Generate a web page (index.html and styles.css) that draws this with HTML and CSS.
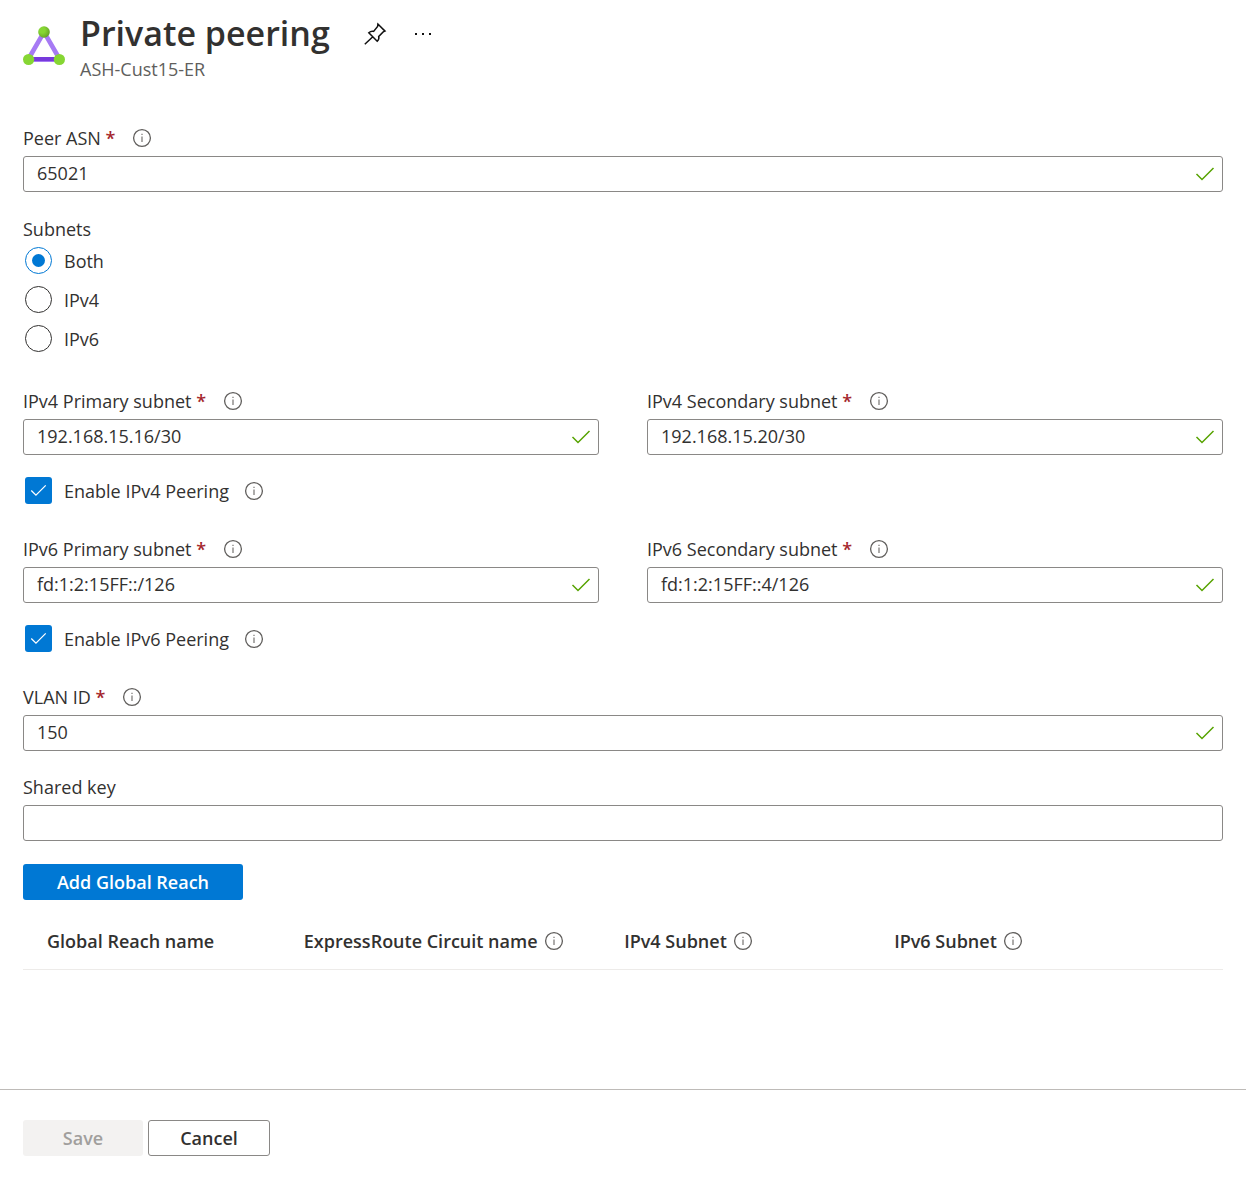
FILE: index.html
```html
<!DOCTYPE html>
<html lang="en">
<head>
<meta charset="utf-8">
<meta name="viewport" content="width=device-width, initial-scale=1">
<title>Private peering</title>
<link rel="stylesheet" href="styles.css">
</head>
<body>
<svg class="sprite" aria-hidden="true">
  <symbol id="info" viewBox="0 0 20 20">
    <circle cx="10" cy="10" r="8.4" fill="none" stroke="#605e5c" stroke-width="1.3"/>
    <path d="M10 8.5V14M10 5.8V7" fill="none" stroke="#8a8886" stroke-width="1.4"/>
  </symbol>
  <symbol id="check" viewBox="0 0 20 20">
    <path d="M1.5 10L7 15.5L18.5 4" fill="none" stroke="currentColor" stroke-width="1.5"/>
  </symbol>
</svg>
<header class="header">
  <svg class="logo" viewBox="0 0 42 42" aria-hidden="true">
    <defs>
      <radialGradient id="dot" cx="0.35" cy="0.35" r="0.8"><stop offset="0.3" stop-color="#86d633"/><stop offset="1" stop-color="#5e9624"/></radialGradient>
    </defs>
    <path d="M6 34L21 8L36 34" fill="none" stroke="#a67af4" stroke-width="4.6"/>
    <path d="M6 35.500H36" stroke="#a67af4" stroke-width="5"/>
    <path d="M6 35H36" stroke="#773adc" stroke-width="4"/>
    <circle cx="21" cy="8" r="5.800" fill="url(#dot)"/>
    <circle cx="5.600" cy="35.500" r="5.600" fill="#86d633"/>
    <circle cx="36.400" cy="35.500" r="5.600" fill="#86d633"/>
  </svg>
  <div class="heading">
    <h1 class="title">Private peering</h1>
    <p class="subtitle">ASH-Cust15-ER</p>
  </div>
  <div class="tools">
    <button class="tool" type="button" aria-label="Pin">
      <svg class="tool-icon" viewBox="0 0 24 24" fill="none" stroke="#111" stroke-width="1.5" stroke-linejoin="miter"><path d="M14.900 2L22 9.100L20.200 9.900L15.700 14.400C16.300 16.200 15.600 17.800 14.200 19.200L5.800 10.800C7.400 9.300 9 8.900 10.600 9.400L14.600 4.500ZM9.800 14.800L1.800 22.200"/></svg>
    </button>
    <button class="tool" type="button" aria-label="More">
      <svg class="tool-icon" viewBox="0 0 24 24" fill="#111"><path d="M4 11h2v2H4zM11 11h2v2h-2zM18 11h2v2h-2z"/></svg>
    </button>
  </div>
</header>
<main class="form">
  <div class="field">
    <div class="label-row"><label for="asn">Peer ASN <span class="required">*</span></label><svg class="info"><use href="#info"/></svg></div>
    <div class="control"><input class="input" id="asn" type="text" value="65021"><svg class="valid"><use href="#check"/></svg></div>
  </div>
  <fieldset class="subnets">
    <legend class="label-row">Subnets</legend>
    <div class="options">
      <label class="option"><input class="radio" type="radio" name="subnets" checked>Both</label>
      <label class="option"><input class="radio" type="radio" name="subnets">IPv4</label>
      <label class="option"><input class="radio" type="radio" name="subnets">IPv6</label>
    </div>
  </fieldset>
  <section class="peering">
    <div class="pair">
      <div class="field">
        <div class="label-row"><label for="v4p">IPv4 Primary subnet <span class="required">*</span></label><svg class="info"><use href="#info"/></svg></div>
        <div class="control"><input class="input" id="v4p" type="text" value="192.168.15.16/30"><svg class="valid"><use href="#check"/></svg></div>
      </div>
      <div class="field">
        <div class="label-row"><label for="v4s">IPv4 Secondary subnet <span class="required">*</span></label><svg class="info"><use href="#info"/></svg></div>
        <div class="control"><input class="input" id="v4s" type="text" value="192.168.15.20/30"><svg class="valid"><use href="#check"/></svg></div>
      </div>
    </div>
    <div class="enable">
      <label class="option"><span class="tick"><input class="checkbox" type="checkbox" checked><svg class="tick-mark"><use href="#check"/></svg></span>Enable IPv4 Peering</label>
      <svg class="info"><use href="#info"/></svg>
    </div>
  </section>
  <section class="peering">
    <div class="pair">
      <div class="field">
        <div class="label-row"><label for="v6p">IPv6 Primary subnet <span class="required">*</span></label><svg class="info"><use href="#info"/></svg></div>
        <div class="control"><input class="input" id="v6p" type="text" value="fd:1:2:15FF::/126"><svg class="valid"><use href="#check"/></svg></div>
      </div>
      <div class="field">
        <div class="label-row"><label for="v6s">IPv6 Secondary subnet <span class="required">*</span></label><svg class="info"><use href="#info"/></svg></div>
        <div class="control"><input class="input" id="v6s" type="text" value="fd:1:2:15FF::4/126"><svg class="valid"><use href="#check"/></svg></div>
      </div>
    </div>
    <div class="enable">
      <label class="option"><span class="tick"><input class="checkbox" type="checkbox" checked><svg class="tick-mark"><use href="#check"/></svg></span>Enable IPv6 Peering</label>
      <svg class="info"><use href="#info"/></svg>
    </div>
  </section>
  <div class="field">
    <div class="label-row"><label for="vlan">VLAN ID <span class="required">*</span></label><svg class="info"><use href="#info"/></svg></div>
    <div class="control"><input class="input" id="vlan" type="text" value="150"><svg class="valid"><use href="#check"/></svg></div>
  </div>
  <div class="field shared">
    <div class="label-row"><label for="key">Shared key</label></div>
    <div class="control"><input class="input" id="key" type="text"></div>
  </div>
  <button class="button primary" type="button">Add Global Reach</button>
  <table class="reach">
    <colgroup><col class="col-name"><col class="col-circuit"><col class="col-v4"><col></colgroup>
    <thead>
      <tr>
        <th scope="col">Global Reach name</th>
        <th scope="col"><span class="th-info">ExpressRoute Circuit name<svg class="info"><use href="#info"/></svg></span></th>
        <th scope="col"><span class="th-info">IPv4 Subnet<svg class="info"><use href="#info"/></svg></span></th>
        <th scope="col"><span class="th-info">IPv6 Subnet<svg class="info"><use href="#info"/></svg></span></th>
      </tr>
    </thead>
  </table>
</main>
<footer class="footer">
  <button class="button save" type="button" disabled>Save</button>
  <button class="button cancel" type="button">Cancel</button>
</footer>
</body>
</html>
```
FILE: styles.css
```css
* {
  box-sizing: border-box;
}

body {
  margin: 0;
  min-height: 100vh;
  display: flex;
  flex-direction: column;
  background: #fff;
  color: #323130;
  font: 400 18px/28px "Open Sans", "Noto Sans", sans-serif;
}

button,
input {
  font: inherit;
  color: inherit;
  margin: 0;
}

svg {
  display: block;
  flex: none;
}

.sprite {
  position: absolute;
  width: 0;
  height: 0;
}

.header {
  display: flex;
  align-items: flex-start;
  padding: 11px 23px 0;
}

.logo {
  width: 42px;
  height: 42px;
  margin: 13px 15px 0 0;
}

.title {
  margin: 0;
  font-size: 34px;
  line-height: 44px;
  font-weight: 600;
}

.subtitle {
  margin: 0;
  font-size: 18px;
  line-height: 28px;
  color: #605e5c;
}

.tools {
  display: flex;
  gap: 24px;
  margin: 11px 0 0 33px;
}

.tool {
  padding: 0;
  border: 0;
  background: none;
}

.tool-icon {
  width: 24px;
  height: 24px;
}

.form {
  padding: 41px 23px 0;
}

.label-row {
  display: flex;
  align-items: center;
  gap: 17px;
  height: 28px;
  margin-bottom: 4px;
  padding: 0;
}

.required {
  color: #a4262c;
  font-weight: 600;
}

.info {
  width: 20px;
  height: 20px;
}

.control {
  display: flex;
  align-items: center;
  height: 36px;
  padding-right: 7px;
  border: 1px solid #8a8886;
  border-radius: 3px;
}

.input {
  flex: 1;
  min-width: 0;
  height: 100%;
  padding: 0 0 2px 13px;
  border: 0;
  outline: 0;
  background: transparent;
}

.valid {
  width: 20px;
  height: 20px;
  color: #57a300;
}

.subnets {
  margin: 23px 0 35px;
  padding: 0;
  border: 0;
}

.options {
  display: grid;
  gap: 12px;
}

.option {
  display: flex;
  align-items: center;
  gap: 12px;
  height: 27px;
  padding-left: 2px;
}

.radio {
  appearance: none;
  display: grid;
  place-items: center;
  width: 27px;
  height: 27px;
  border: 1px solid #323130;
  border-radius: 50%;
}

.radio:checked {
  border-color: #0078d4;
}

.radio:checked::before {
  content: "";
  width: 13px;
  height: 13px;
  border-radius: 50%;
  background: #0078d4;
}

.peering {
  margin-bottom: 31px;
}

.pair {
  display: grid;
  grid-template-columns: 1fr 1fr;
  gap: 48px;
}

.enable {
  display: flex;
  align-items: center;
  gap: 15px;
  margin-top: 22px;
}

.tick {
  display: grid;
  place-items: center;
}

.checkbox,
.tick-mark {
  grid-area: 1 / 1;
}

.checkbox {
  appearance: none;
  width: 27px;
  height: 27px;
  border-radius: 3px;
}

.checkbox:checked {
  background: #0078d4;
}

.tick-mark {
  position: relative;
  width: 17px;
  height: 17px;
  color: #fff;
  pointer-events: none;
}

.shared {
  margin: 22px 0 23px;
}

.button {
  height: 36px;
  padding: 0 31px;
  border: 1px solid transparent;
  border-radius: 3px;
  line-height: 28px;
  font-weight: 600;
}

.primary {
  display: block;
  min-width: 220px;
  background: #0078d4;
  color: #fff;
}

.reach {
  width: 100%;
  margin-top: 14px;
  table-layout: fixed;
  border-collapse: collapse;
}

.reach th {
  height: 55px;
  padding: 0 0 0 24px;
  border-bottom: 1px solid #edebe9;
  text-align: left;
  font-weight: 600;
  white-space: nowrap;
}

.th-info {
  display: flex;
  align-items: center;
  gap: 6px;
}

.col-name {
  width: 21.4%;
}

.col-circuit {
  width: 26.7%;
}

.col-v4 {
  width: 22.5%;
}

.footer {
  display: flex;
  gap: 5px;
  margin-top: auto;
  padding: 30px 23px 24px;
  border-top: 1px solid #bebbb8;
}

.save {
  min-width: 120px;
  background: #f3f2f1;
  color: #a19f9d;
}

.cancel {
  min-width: 122px;
  border-color: #8a8886;
  background: #fff;
}
```
